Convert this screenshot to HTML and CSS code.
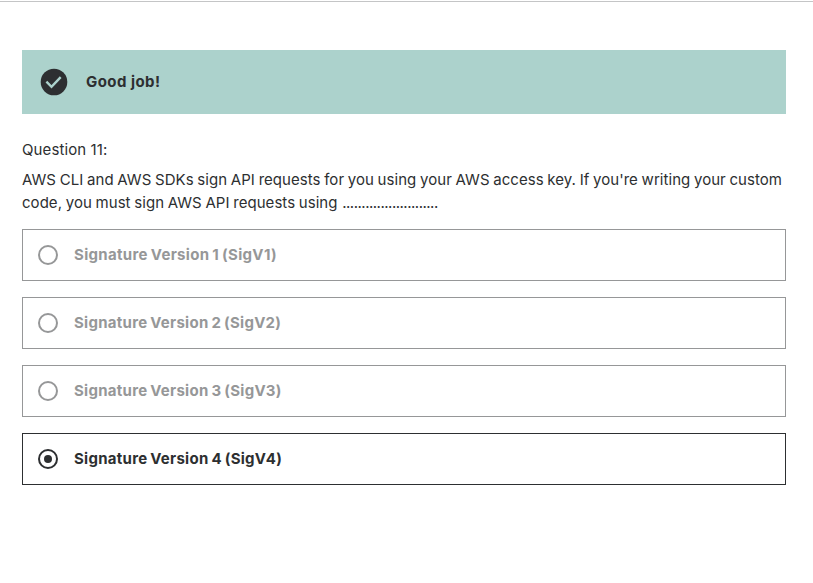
FILE: index.html
```html
<!DOCTYPE html>
<html lang="en">
<head>
<meta charset="utf-8">
<title>Question 11</title>
<link rel="stylesheet" href="styles.css">
</head>
<body>
<main class="quiz">
  <div class="banner">
    <svg class="banner-icon" viewBox="0 0 28 28"><circle cx="14" cy="14" r="13.3" fill="#2d2f31"/><path d="M6.4 13.7l5.1 5.1 9.2-9.7" fill="none" stroke="#acd2cc" stroke-width="2.4"/></svg>
    <strong class="banner-text">Good job!</strong>
  </div>
  <div class="label">Question 11:</div>
  <div class="prompt">
    <div class="line">AWS CLI and AWS SDKs sign API requests for you using your AWS access key. If you're writing your custom</div>
    <div class="line">code, you must sign AWS API requests using <span class="dots">.........................</span></div>
  </div>
  <ul class="answers">
    <li class="answer"><span class="radio"></span><span class="option option-first">Signature Version 1 (SigV1)</span></li>
    <li class="answer"><span class="radio"></span><span class="option">Signature Version 2 (SigV2)</span></li>
    <li class="answer"><span class="radio"></span><span class="option">Signature Version 3 (SigV3)</span></li>
    <li class="answer selected"><span class="radio"></span><span class="option">Signature Version 4 (SigV4)</span></li>
  </ul>
</main>
</body>
</html>
```

FILE: styles.css
```css
* { box-sizing: border-box; }
body {
  margin: 0;
  padding-top: 1px;
  background: #fff;
  color: #2d2f31;
  font: 15px/23px Inter, sans-serif;
}
.quiz {
  min-height: 582px;
  border-top: 1px solid #c4c5c6;
  padding: 48px 27px 0 22px;
}
.banner {
  display: flex;
  align-items: center;
  height: 64px;
  padding-left: 18px;
  background: #acd2cc;
}
.banner-icon { width: 28px; height: 28px; margin-right: 18px; }
.banner-text { font-weight: 700; letter-spacing: 0.45px; padding-bottom: 2px; }
.label { margin-top: 24px; letter-spacing: 0.1px; }
.prompt { margin-top: 7px; letter-spacing: 0.04px; word-spacing: -0.55px; }
.line { white-space: nowrap; }
.dots { letter-spacing: -0.5px; margin-left: 1px; }
.answers { list-style: none; margin: 15px 0 0; padding: 0; display: grid; gap: 16px; }
.answer {
  display: flex;
  align-items: center;
  height: 52px;
  padding-left: 15px;
  border: 1px solid #969798;
  color: #969798;
  font-weight: 700;
}
.option { padding-bottom: 2px; letter-spacing: 0.27px; word-spacing: -0.9px; }
.option-first { letter-spacing: 0.32px; }
.radio {
  display: grid;
  place-items: center;
  width: 20px;
  height: 20px;
  margin-right: 16px;
  border: 2px solid currentColor;
  border-radius: 50%;
}
.selected { color: #2d2f31; border-color: #2d2f31; }
.selected .radio::after {
  content: "";
  width: 8px;
  height: 8px;
  border-radius: 50%;
  background: currentColor;
}
```
